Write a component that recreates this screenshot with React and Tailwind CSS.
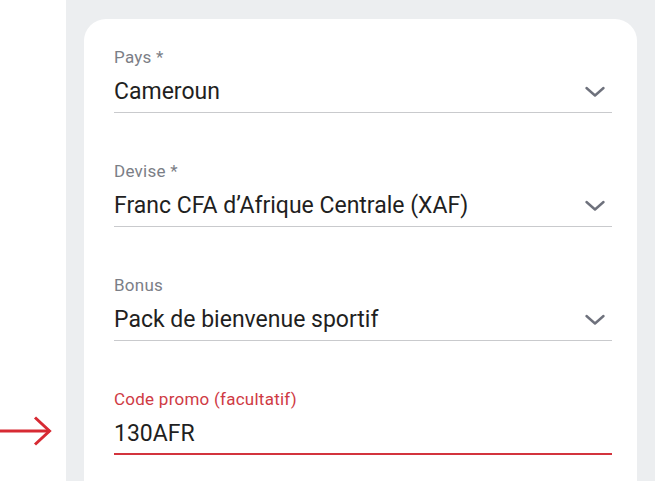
import React from 'react';

const fields = [
    { id: 'pays', label: 'Pays *', value: 'Cameroun', select: true },
    { id: 'devise', label: 'Devise *', value: 'Franc CFA d’Afrique Centrale (XAF)', select: true },
    { id: 'bonus', label: 'Bonus', value: 'Pack de bienvenue sportif', select: true },
    { id: 'promo', label: 'Code promo (facultatif)', value: '130AFR', active: true },
];

function ChevronDown() {
    return (
        <svg width="22" height="14" viewBox="0 0 22 14" fill="none" className="mr-[6px] shrink-0">
            <path d="M2.5 3 L11 10.5 L19.5 3" stroke="#6e717c" strokeWidth="2.4" strokeLinecap="round" strokeLinejoin="round" />
        </svg>
    );
}

function ArrowRight() {
    return (
        <svg width="54" height="32" viewBox="0 0 54 32" fill="none">
            <path d="M0 16 H50" stroke="#d72a33" strokeWidth="3" />
            <path d="M35 2.5 L49.5 16 L35 29.5" stroke="#d72a33" strokeWidth="3" strokeLinejoin="miter" />
        </svg>
    );
}

function Field({ field }) {
    return (
        <div
            className={
                field.active
                    ? 'border-b-[2.5px] border-[#d3343d] pb-[3px]'
                    : 'border-b-[1.5px] border-[#c9cacd] pb-[4px]'
            }
        >
            <div
                className={`h-5 text-[17px] leading-5 tracking-[0.25px] ${field.active ? 'text-[#cf3a44]' : 'text-[#7b7e86]'}`}
            >
                {field.label}
            </div>
            <div className="mt-[9px] flex h-8 items-center justify-between text-[23px] leading-8 text-[#1f1f22]">
                <span>{field.value}</span>
                {field.select ? <ChevronDown /> : null}
            </div>
        </div>
    );
}

export default function App() {
    return (
        <div className="flex h-[481px] w-[655px] overflow-hidden bg-white font-['Roboto',sans-serif]">
            <div className="w-[66px] shrink-0 pt-[415px]">
                <ArrowRight />
            </div>
            <div className="flex-1 bg-[#eceef0] px-[18px] pt-[19px]">
                <div className="h-full rounded-t-[22px] bg-white pl-[30px] pr-[25px] pt-[28px]">
                    <div className="flex flex-col gap-[48px]">
                        {fields.map((field) => (
                            <Field key={field.id} field={field} />
                        ))}
                    </div>
                </div>
            </div>
        </div>
    );
}
